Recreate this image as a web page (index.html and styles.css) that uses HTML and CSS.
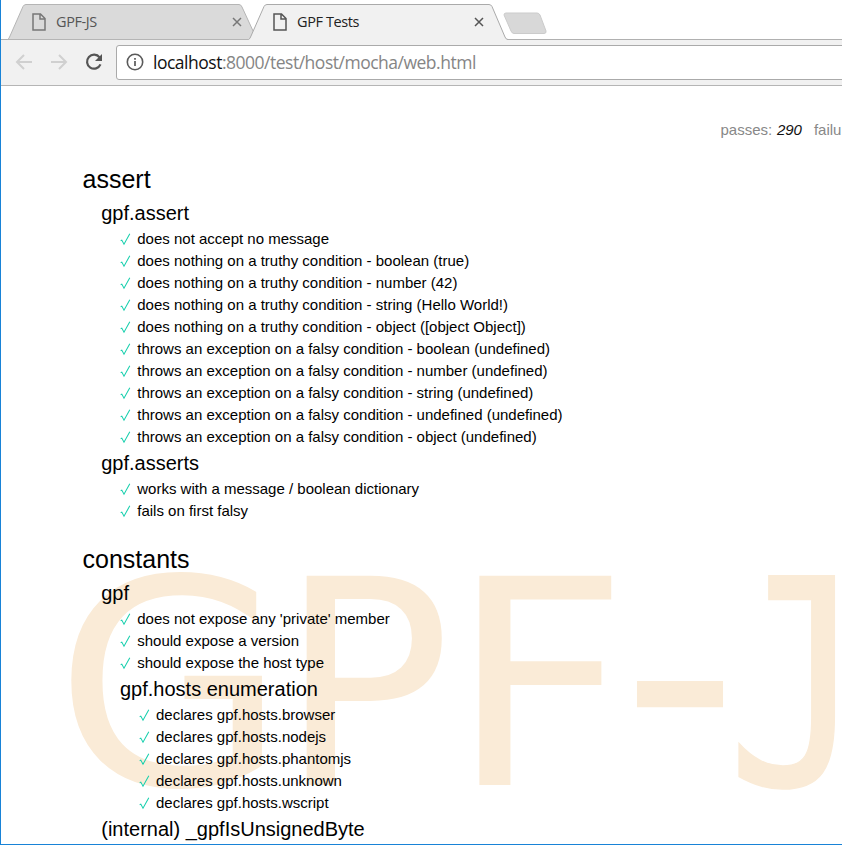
FILE: index.html
```
<!DOCTYPE html>
<html lang="en">
<head>
<meta charset="utf-8">
<title>GPF Tests</title>
<link rel="stylesheet" href="styles.css">
</head>
<body>
<svg class="defs" width="0" height="0">
  <symbol id="check" viewBox="0 0 11 13"><path d="M.7 7.7 1.8 7.1 4 11.2 9.8.8" fill="none" stroke="#16cfad" stroke-width="1.05"/></symbol>
  <symbol id="page" viewBox="0 0 14 18"><path d="M1 1H8.5L13 5.5V17H1ZM8 1V6H13" fill="none" stroke="currentColor" stroke-width="1.5"/></symbol>
  <symbol id="close" viewBox="0 0 10 10"><path d="M1 1 9 9M9 1 1 9" stroke="currentColor" stroke-width="1.5"/></symbol>
</svg>
<div class="window">
  <header class="tabs">
    <div class="tab">
      <svg class="shape" width="252" height="36"><path d="M.5 35.5Q2 35 3 32L16 2.5Q17 .5 19 .5H232Q234 .5 235 3L250 35.5Z" fill="#dadada" stroke="#b5b5b5"/></svg>
      <svg class="page"><use href="#page"/></svg><span class="title">GPF-JS</span><svg class="close"><use href="#close"/></svg>
    </div>
    <div class="tab active">
      <svg class="shape" width="262" height="37"><path d="M.5 35.5Q2 35 3 32L16 2.5Q17 .5 19 .5H241Q243 .5 244 2.5L257 33Q258 35.5 260 35.5V37H0Z" fill="#f1f1f1"/><path d="M.5 35.5Q2 35 3 32L16 2.5Q17 .5 19 .5H241Q243 .5 244 2.5L257 33Q258 35.5 260 35.5" fill="none" stroke="#aaa"/></svg>
      <svg class="page"><use href="#page"/></svg><span class="title">GPF Tests</span><svg class="close"><use href="#close"/></svg>
    </div>
    <svg class="newtab" width="44" height="23"><path d="M3 1H34Q36 1 37 3L43 19Q43.5 21.5 41 21.5H11Q9 21.5 8 19L1 3Q1 1 3 1Z" fill="#d8d8d8" stroke="#cbcbcb"/></svg>
  </header>
  <nav class="toolbar">
    <svg class="nav" width="18" height="16"><path d="M17 8H2M9 1 2 8 9 15" fill="none" stroke="#d0d0d0" stroke-width="2"/></svg>
    <svg class="nav" width="18" height="16"><path d="M1 8H16M9 1 16 8 9 15" fill="none" stroke="#d0d0d0" stroke-width="2"/></svg>
    <svg class="reload" width="18" height="18"><path d="M14.6 4.4A7 7 0 1 0 15.5 11.4" fill="none" stroke="#555" stroke-width="2.2"/><path d="M17 1V8H10Z" fill="#555"/></svg>
    <div class="address">
      <svg width="18" height="18"><circle cx="9" cy="9" r="7.7" fill="none" stroke="#5a5a5a" stroke-width="1.6"/><path d="M9 8V13M9 5V6.7" stroke="#5a5a5a" stroke-width="1.7"/></svg>
      <span class="url"><b>localhost</b>:8000/test/host/mocha/web.html</span>
    </div>
  </nav>
  <main class="content">
    <svg class="watermark" width="841" height="758">
      <text x="53.5" y="699" textLength="232" lengthAdjust="spacingAndGlyphs">G</text>
      <text x="277.5" y="699">P</text>
      <text x="447.5" y="699" textLength="181" lengthAdjust="spacingAndGlyphs">F</text>
      <text class="dash" x="620" y="697.7">-</text>
      <text class="hook" x="725.7" y="699" textLength="139" lengthAdjust="spacingAndGlyphs">J</text>
    </svg>
    <div class="stats"><span>passes: <em>290</em></span><span>failures:</span></div>
    <section class="report">
      <h1>assert</h1>
      <div class="suite">
        <h2>gpf.assert</h2>
        <ul>
          <li><svg><use href="#check"/></svg><span>does not accept no message</span></li>
          <li><svg><use href="#check"/></svg><span>does nothing on a truthy condition - boolean (true)</span></li>
          <li><svg><use href="#check"/></svg><span>does nothing on a truthy condition - number (42)</span></li>
          <li><svg><use href="#check"/></svg><span>does nothing on a truthy condition - string (Hello World!)</span></li>
          <li><svg><use href="#check"/></svg><span>does nothing on a truthy condition - object ([object Object])</span></li>
          <li><svg><use href="#check"/></svg><span>throws an exception on a falsy condition - boolean (undefined)</span></li>
          <li><svg><use href="#check"/></svg><span>throws an exception on a falsy condition - number (undefined)</span></li>
          <li><svg><use href="#check"/></svg><span>throws an exception on a falsy condition - string (undefined)</span></li>
          <li><svg><use href="#check"/></svg><span>throws an exception on a falsy condition - undefined (undefined)</span></li>
          <li><svg><use href="#check"/></svg><span>throws an exception on a falsy condition - object (undefined)</span></li>
        </ul>
        <h2>gpf.asserts</h2>
        <ul>
          <li><svg><use href="#check"/></svg><span>works with a message / boolean dictionary</span></li>
          <li><svg><use href="#check"/></svg><span>fails on first falsy</span></li>
        </ul>
      </div>
      <h1>constants</h1>
      <div class="suite">
        <h2>gpf</h2>
        <ul>
          <li><svg><use href="#check"/></svg><span>does not expose any 'private' member</span></li>
          <li><svg><use href="#check"/></svg><span>should expose a version</span></li>
          <li><svg><use href="#check"/></svg><span>should expose the host type</span></li>
        </ul>
        <div class="suite">
          <h2>gpf.hosts enumeration</h2>
          <ul>
            <li><svg><use href="#check"/></svg><span>declares gpf.hosts.browser</span></li>
            <li><svg><use href="#check"/></svg><span>declares gpf.hosts.nodejs</span></li>
            <li><svg><use href="#check"/></svg><span>declares gpf.hosts.phantomjs</span></li>
            <li><svg><use href="#check"/></svg><span>declares gpf.hosts.unknown</span></li>
            <li><svg><use href="#check"/></svg><span>declares gpf.hosts.wscript</span></li>
          </ul>
        </div>
        <h2>(internal) _gpfIsUnsignedByte</h2>
      </div>
    </section>
  </main>
</div>
</body>
</html>
```
FILE: styles.css
```
* { box-sizing: border-box; }
body { margin: 0; overflow: hidden; background: #fff; }
svg { flex: none; }
.defs { position: absolute; }
.window {
  width: 842px; height: 845px; overflow: hidden;
  display: flex; flex-direction: column;
  border-left: 1px solid #1883d7; border-bottom: 1px solid #1883d7;
}
.tabs {
  height: 40px; flex: none; display: flex; padding: 4px 0 0 6px;
  border-bottom: 1px solid #b0b0b0;
  font: 15px "Open Sans", "Noto Sans", sans-serif;
}
.tab {
  position: relative; z-index: 0; width: 241px; height: 36px; padding-left: 25px;
  display: flex; align-items: center; color: #777;
}
.tab.active { width: 254px; color: #555; z-index: 1; }
.shape { position: absolute; left: 0; top: 0; z-index: -1; }
.page { width: 14px; height: 18px; }
.title {
  width: 174px; margin-left: 10px; padding-bottom: 2px;
  font-size: 14.5px; letter-spacing: -.4px; color: #555; white-space: nowrap;
}
.active .title { color: #222; }
.close { width: 10px; height: 10px; margin-left: 2px; }
.active .close { margin-left: 3px; }
.newtab { margin: 8px 0 0 1px; }
.toolbar {
  height: 46px; flex: none; display: flex; align-items: center;
  padding: 0 0 1px 14px; background: #f1f1f1; border-bottom: 1px solid #b5b5b5;
}
.nav { margin-right: 17px; }
.reload { margin-right: 13px; }
.address {
  flex: 1; height: 35px; margin-right: -4px; padding-left: 9px;
  display: flex; align-items: center; background: #fff;
  border: 1px solid #aaa; border-radius: 3px;
}
.url {
  margin-left: 9px; font: 17.5px "Open Sans", "Noto Sans", sans-serif;
  letter-spacing: -.49px; color: #858585; white-space: nowrap;
}
.url b { font-weight: 400; color: #111; }
.content {
  position: relative; z-index: 0; flex: 1; overflow: hidden;
  font-family: "Liberation Sans", Arial, sans-serif; color: #000;
}
.watermark { position: absolute; left: 0; top: 0; z-index: -1; fill: #faebd7; font: 287px "DejaVu Sans", sans-serif; }
.dash { font-size: 327px; }
.hook { font-family: "DejaVu Sans Mono", monospace; stroke: #faebd7; stroke-width: 1.5px; }
.stats {
  display: flex; gap: 12px; margin: 33px 0 0 719.5px; height: 22px;
  line-height: 22px; font-size: 15px; color: #888; white-space: nowrap;
}
.stats em { color: #111; margin-left: .5px; }
.report { padding: 1px 0 0 81.5px; }
.report h1 { margin: 20px 0 0; padding-bottom: 2px; font: 25px/34px "Liberation Sans", Arial, sans-serif; }
.suite { margin-left: 18.75px; }
.suite h2 { margin: 0; font: 20px/30px "Liberation Sans", Arial, sans-serif; }
.report ul { list-style: none; margin: 0 0 0 18.75px; padding: 0; }
.report li { display: flex; align-items: center; height: 22px; font-size: 15px; white-space: nowrap; }
.report li span { padding-bottom: 2px; }
.report li svg { width: 11px; height: 13px; margin-right: 6.25px; }
```
